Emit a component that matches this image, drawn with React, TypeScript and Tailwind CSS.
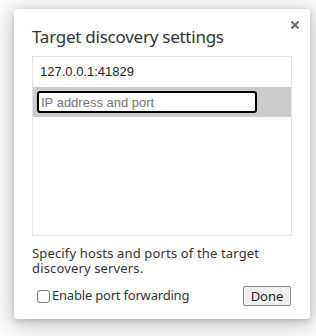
export default function App() {

  return (
    <div className="w-[316px] h-[336px] bg-white pt-[9px] pl-[14px] overflow-hidden">

      <div className="relative w-[296px] h-[310px] bg-white rounded-[3px] shadow-[0_4px_23px_5px_rgba(0,0,0,0.2),0_2px_6px_rgba(0,0,0,0.15)] px-[18px] pt-[17px] font-['Noto_Sans',sans-serif] text-[#333]">

        <div className="absolute right-[10px] top-[11px] w-[10px] h-[10px]">
          <svg width="10" height="10" viewBox="0 0 10 10">
            <path d="M1.5 1.5 L8.5 8.5 M8.5 1.5 L1.5 8.5" stroke="#6e6e6e" strokeWidth="2" />
          </svg>
        </div>

        <h1 className="text-[17px] leading-[22px] text-[#333] tracking-[-0.25px]">
          Target discovery settings
        </h1>

        <div className="mt-[8px] w-[260px] h-[180px] border border-[#e4e4e4] font-['Liberation_Sans',Arial,sans-serif]">

          <div className="h-[30px] flex items-center pl-[7px] text-[13px] text-[#222]">
            127.0.0.1:41829
          </div>

          <div className="h-[30px] bg-[#cccccc] flex items-center pl-[4px]">
            <input
              placeholder="IP address and port"
              className="w-[220px] h-[22px] bg-white border-2 border-black rounded-[3px] px-[2px] text-[13px] text-[#222] placeholder:text-[#757575] outline-none"
            />
          </div>

        </div>

        <p className="mt-[10px] text-[13px] leading-[15px] text-[#333] tracking-[0.15px]">
          Specify hosts and ports of the target
          <br />
          discovery servers.
        </p>

        <div className="mt-[10px] flex items-center justify-between">

          <label className="flex items-center pl-[5px] text-[13px] text-[#333] tracking-[-0.2px]">
            <span className="w-[13px] h-[13px] border border-[#777] rounded-[3px] bg-white mr-[2px]" />
            Enable port forwarding
          </label>

          <button className="w-[48px] h-[20px] border border-[#8a8a8a] rounded-[2px] bg-[#efefef] text-[13px] text-[#222] leading-none mr-[1px]">
            Done
          </button>

        </div>

      </div>

    </div>
  );
}
